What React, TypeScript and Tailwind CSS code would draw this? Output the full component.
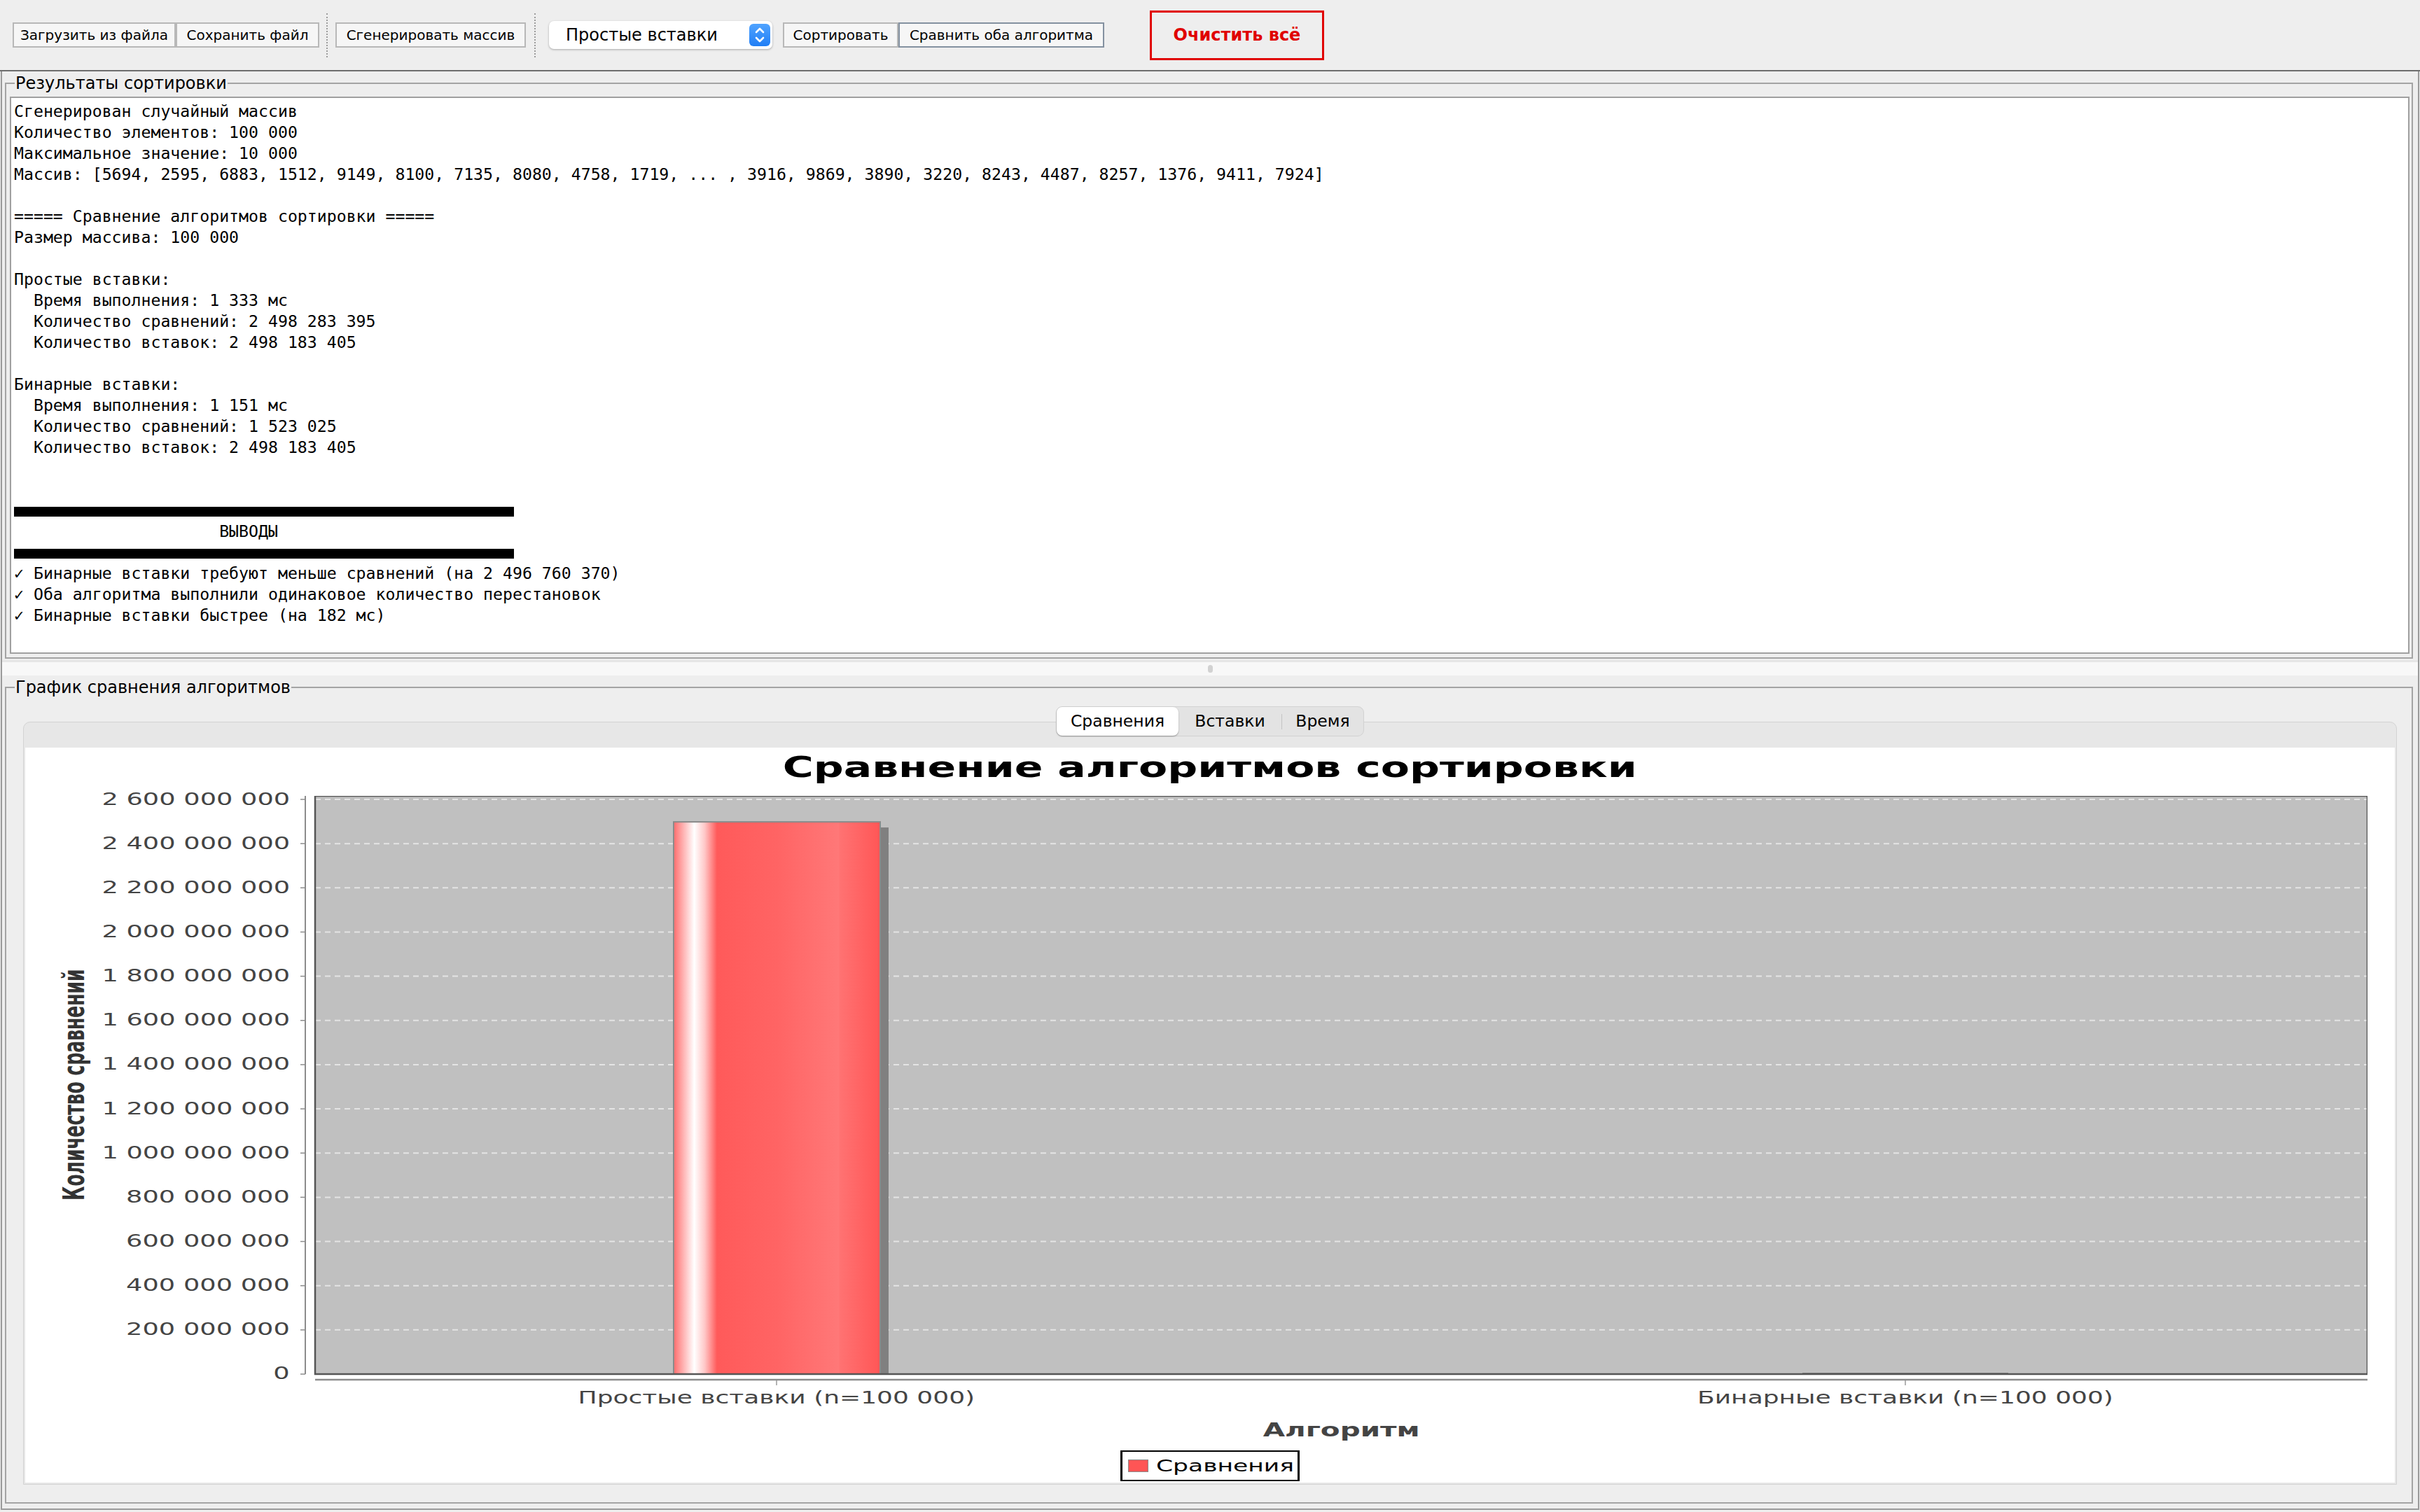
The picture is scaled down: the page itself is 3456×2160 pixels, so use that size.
import React from "react";

const MAX = 2_600_000_000;
const PLOT_W = 2931;
const PLOT_H = 826;
const TOP = 5;
const yOf = (v: number) => PLOT_H - (v / MAX) * (PLOT_H - TOP);
const ticks = Array.from({ length: 14 }, (_, i) => (13 - i) * 200_000_000);
const fmt = (n: number) => n.toString().replace(/\B(?=(\d{3})+(?!\d))/g, " ");

const bars = [
  { x: 512, value: 2_498_283_395 },
  { x: 2124, value: 1_523_025 },
];

const lines: (string | null)[] = [
  "Сгенерирован случайный массив",
  "Количество элементов: 100 000",
  "Максимальное значение: 10 000",
  "Массив: [5694, 2595, 6883, 1512, 9149, 8100, 7135, 8080, 4758, 1719, ... , 3916, 9869, 3890, 3220, 8243, 4487, 8257, 1376, 9411, 7924]",
  "",
  "===== Сравнение алгоритмов сортировки =====",
  "Размер массива: 100 000",
  "",
  "Простые вставки:",
  "  Время выполнения: 1 333 мс",
  "  Количество сравнений: 2 498 283 395",
  "  Количество вставок: 2 498 183 405",
  "",
  "Бинарные вставки:",
  "  Время выполнения: 1 151 мс",
  "  Количество сравнений: 1 523 025",
  "  Количество вставок: 2 498 183 405",
  "",
  "",
  null,
  "                     ВЫВОДЫ",
  null,
  "✓ Бинарные вставки требуют меньше сравнений (на 2 496 760 370)",
  "✓ Оба алгоритма выполнили одинаковое количество перестановок",
  "✓ Бинарные вставки быстрее (на 182 мс)",
];

const Btn = ({ w, children, focus }: { w: string; children: React.ReactNode; focus?: boolean }) => (
  <div
    className={`${w} h-[36px] flex items-center justify-center bg-[#f6f6f6] border-2 text-[20px] text-black whitespace-nowrap ${
      focus ? "border-[#8491a0]" : "border-[#b8b8b8]"
    }`}
  >
    {children}
  </div>
);

const Sep = ({ m }: { m: string }) => <div className={`${m} h-[63px] border-l-2 border-dotted border-[#9c9c9c]`} />;

const Plot = () => (
  <svg width={2967} height={843} className="shrink-0 block">
    <defs>
      <linearGradient id="barFill" x1="0" x2="1" y1="0" y2="0">
        <stop offset="0" stopColor="#ff6c6c" />
        <stop offset="0.04" stopColor="#ffa8a8" />
        <stop offset="0.1" stopColor="#ffffff" />
        <stop offset="0.15" stopColor="#ffc8c8" />
        <stop offset="0.21" stopColor="#ff5a5a" />
        <stop offset="0.5" stopColor="#ff6464" />
        <stop offset="0.8" stopColor="#ff7878" />
        <stop offset="0.805" stopColor="#ff7272" />
        <stop offset="1" stopColor="#ff5656" />
      </linearGradient>
    </defs>
    <line x1={22} y1={0} x2={22} y2={PLOT_H} stroke="#8c8c8c" strokeWidth={2} />
    {ticks.map((t) => (
      <line key={t} x1={15} x2={22} y1={yOf(t)} y2={yOf(t)} stroke="#8c8c8c" strokeWidth={1.5} />
    ))}
    <g transform="translate(36,0)">
      <rect x={0} y={0} width={PLOT_W} height={PLOT_H} fill="#c0c0c0" />
      {ticks.slice(0, 13).map((t) => (
        <line
          key={t}
          x1={0}
          x2={PLOT_W}
          y1={yOf(t)}
          y2={yOf(t)}
          stroke="#e4e4e4"
          strokeWidth={2}
          strokeDasharray="8 6"
        />
      ))}
      {bars.map((b) => {
        const top = yOf(b.value);
        if (PLOT_H - top < 3) {
          return <rect key={b.x} x={b.x} y={PLOT_H - 2} width={294} height={2} fill="#808080" />;
        }
        return (
          <g key={b.x}>
            <rect x={b.x + 12} y={top + 8} width={295} height={PLOT_H - top - 8} fill="#808080" />
            <rect x={b.x} y={top} width={295} height={PLOT_H - top} fill="url(#barFill)" stroke="#8a8a8a" strokeWidth={2} />
          </g>
        );
      })}
      <rect x={0} y={0} width={PLOT_W} height={PLOT_H} fill="none" stroke="#555555" strokeWidth={2.5} />
    </g>
    <line x1={36} x2={36 + PLOT_W} y1={834} y2={834} stroke="#8c8c8c" strokeWidth={2.5} />
    <line x1={695} x2={695} y1={835} y2={842} stroke="#9a9a9a" strokeWidth={1.5} />
    <line x1={2307} x2={2307} y1={835} y2={842} stroke="#9a9a9a" strokeWidth={1.5} />
  </svg>
);

const Chart = () => (
  <div className="h-[1050px] bg-white flex flex-col">
    <div className="h-[56px] flex items-center justify-center">
      <span className="inline-block scale-x-[1.5] text-[40px] font-bold text-black whitespace-nowrap">
        Сравнение алгоритмов сортировки
      </span>
    </div>
    <div className="h-[13px]" />
    <div className="flex h-[843px]">
      <div className="w-[140px] h-[826px] shrink-0 flex items-center justify-center">
        <span className="shrink-0 inline-block whitespace-nowrap -rotate-90 scale-y-[1.7] text-[25px] font-bold text-[#333333]">
          Количество сравнений
        </span>
      </div>
      <div className="w-[238px] h-[826px] shrink-0 pt-[5px] flex flex-col justify-between items-end">
        {ticks.map((t) => (
          <div key={t} className="h-0 flex items-center">
            <span className="inline-block origin-right scale-x-[1.5] text-[24.5px] text-[#444444] whitespace-nowrap">
              {fmt(t)}
            </span>
          </div>
        ))}
      </div>
      <Plot />
    </div>
    <div className="h-[34px] flex justify-between items-center pl-[1073px] pr-[699px]">
      {["Простые вставки (n=100 000)", "Бинарные вставки (n=100 000)"].map((c) => (
        <div key={c} className="w-0 flex justify-center">
          <span className="shrink-0 inline-block scale-x-[1.5] text-[24px] text-[#444444] whitespace-nowrap">{c}</span>
        </div>
      ))}
    </div>
    <div className="h-[58px] flex items-center justify-center pl-[414px] pr-[39px]">
      <span className="inline-block scale-x-[1.5] text-[27px] font-bold text-[#444444]">Алгоритм</span>
    </div>
    <div className="flex justify-center">
      <div className="w-[256px] h-[44px] border-y-2 border-x-[3px] border-black flex items-center">
        <div className="ml-[8px] w-[29px] h-[18px] bg-[#ff5555] border border-[#8a8a8a]" />
        <span className="ml-[11px] inline-block origin-left scale-x-[1.5] text-[23px] text-black whitespace-nowrap">
          Сравнения
        </span>
      </div>
    </div>
  </div>
);

export default function App() {
  return (
    <div className="w-[3456px] h-[2160px] bg-[#eeeeee] overflow-hidden flex flex-col font-['DejaVu_Sans',sans-serif]">
      <div className="h-[102px] shrink-0 flex items-center border-b-2 border-[#6e6e6e] pl-[18px]">
        <Btn w="w-[233px]">Загрузить из файла</Btn>
        <Btn w="w-[205px]">Сохранить файл</Btn>
        <Sep m="ml-[10px] mr-[11px]" />
        <Btn w="w-[272px]">Сгенерировать массив</Btn>
        <Sep m="ml-[12px] mr-[19px]" />
        <div className="w-[319px] h-[40px] bg-white rounded-[7px] shadow-[0_1px_3px_rgba(0,0,0,0.3)] flex items-center justify-between pl-[24px] pr-[3px]">
          <span className="text-[24px] text-black whitespace-nowrap">Простые вставки</span>
          <div className="w-[30px] h-[32px] rounded-[6px] bg-gradient-to-b from-[#4fa3ff] to-[#1f7ef5] flex items-center justify-center">
            <svg width="16" height="26" viewBox="0 0 16 26" fill="none" stroke="white" strokeWidth="2.6" strokeLinecap="round" strokeLinejoin="round">
              <path d="M3 9 L8 4 L13 9" />
              <path d="M3 17 L8 22 L13 17" />
            </svg>
          </div>
        </div>
        <div className="ml-[15px] flex">
          <Btn w="w-[165px]">Сортировать</Btn>
          <Btn w="w-[294px]" focus>
            Сравнить оба алгоритма
          </Btn>
        </div>
        <div className="ml-[65px] w-[249px] h-[71px] border-[3px] border-[#e00000] flex items-center justify-center">
          <span className="text-[24px] font-bold text-[#e00000] whitespace-nowrap">Очистить всё</span>
        </div>
      </div>

      <div className="flex-1 ml-[1px] w-[3454px] mb-[3px] border-x-2 border-b-2 border-[#9a9a9a] flex flex-col">
        <fieldset className="mt-[2px] ml-[4px] mr-[7px] border-2 border-[#a4a4a4] pt-[4px] pb-[5px]">
          <legend className="ml-[12px] px-[1px] text-[24px] leading-[30px] text-black">Результаты сортировки</legend>
          <div className="ml-[5px] mr-[3px] h-[796px] bg-white border-2 border-[#a0a0a0] pl-[4px] pt-[4px] overflow-hidden">
            <div className="font-['DejaVu_Sans_Mono',monospace] text-[23.2px] leading-[30px] text-black whitespace-pre">
              {lines.map((l, i) =>
                l === null ? (
                  <div key={i} className="h-[30px] flex items-center">
                    <div className="w-[714px] h-[14px] bg-black mt-[4px]" />
                  </div>
                ) : (
                  <div key={i} className="h-[30px]">
                    {l}
                  </div>
                )
              )}
            </div>
          </div>
        </fieldset>

        <div className="h-[26px] shrink-0 pt-[2px]">
          <div className="h-[22px] bg-[#f8f8f8] border-t-[3px] border-[#e6e6e6] flex items-center justify-center">
            <div className="w-[7px] h-[11px] rounded-full bg-[#d2d2d2]" />
          </div>
        </div>

        <fieldset className="ml-[4px] mr-[7px] border-2 border-[#a4a4a4] pt-[12px] pb-[25px]">
          <legend className="ml-[12px] px-[1px] text-[24px] leading-[30px] text-black">График сравнения алгоритмов</legend>
          <div className="ml-[24px] mr-[21px] flex flex-col items-center">
            <div className="relative z-10 h-[43px] flex items-center rounded-[9px] bg-[#e3e3e3] border border-[#d2d2d2] text-[23.5px] text-black">
              <div className="w-[174px] h-[41px] bg-white rounded-[8px] shadow-[0_1px_2px_rgba(0,0,0,0.35)] flex items-center justify-center">
                Сравнения
              </div>
              <div className="w-[147px] flex items-center justify-center">Вставки</div>
              <div className="w-px h-[22px] bg-[#c4c4c4]" />
              <div className="w-[116px] flex items-center justify-center">Время</div>
            </div>
            <div className="-mt-[21px] w-full h-[1090px] bg-[#e7e7e7] border border-[#d3d3d3] rounded-t-[10px] pt-[36px] px-[2px] pb-[2px]">
              <Chart />
            </div>
          </div>
        </fieldset>
      </div>
    </div>
  );
}
